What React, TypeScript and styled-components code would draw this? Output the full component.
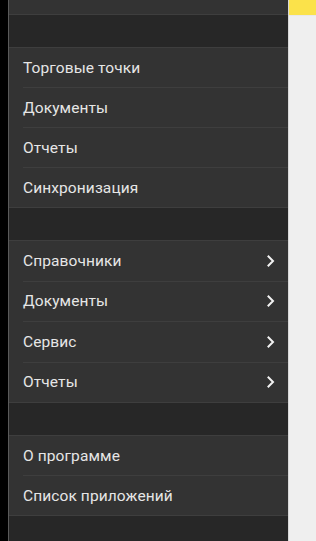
import React from "react";
import styled, { createGlobalStyle } from "styled-components";

const GlobalStyle = createGlobalStyle`
  html, body {
    margin: 0;
    padding: 0;
    background: #000;
    overflow: hidden;
  }
  body {
    font-family: Roboto, "Noto Sans", sans-serif;
  }
`;

const Screen = styled.div`
  display: flex;
  width: 316px;
  height: 541px;
  overflow: hidden;
`;

const Edge = styled.div`
  width: 8px;
  flex: none;
  background: #000;
  border-right: 1px solid #5a5a5a;
`;

const Drawer = styled.nav`
  width: 279px;
  flex: none;
  background: #272727;
  overflow: hidden;
`;

const Scroller = styled.div`
  display: flex;
  flex-direction: column;
  gap: 32px;
  margin-top: -26px;
`;

const Section = styled.ul`
  margin: 0;
  padding: 0;
  list-style: none;
  background: #333333;
  border-top: 1px solid #3e3e3e;
  border-bottom: 1px solid #3e3e3e;
`;

interface ItemProps {
  $tall?: boolean;
}

const Item = styled.li<ItemProps>`
  display: flex;
  align-items: center;
  justify-content: space-between;
  height: ${(p) => (p.$tall ? "39.5px" : "39px")};
  margin-left: 14px;
  padding-right: 12px;
  color: #e6e6e6;
  font-size: 15.5px;
  letter-spacing: 0.1px;

  & + & {
    border-top: 1px solid #3e3e3e;
  }
`;

const Content = styled.main`
  flex: 1;
  display: flex;
  flex-direction: column;
  background: #efefef;
  border-left: 1px solid #d8d8d8;
`;

const TopBar = styled.div`
  height: 15px;
  background: #fbe24a;
  border-bottom: 1px solid #e8e8e8;
`;

function Chevron(): JSX.Element {
  return (
    <svg width="10" height="12" viewBox="0 0 10 12">
      <polyline
        points="2.5,1.5 7,6 2.5,10.5"
        fill="none"
        stroke="#f2f2f2"
        strokeWidth="2"
        strokeLinecap="square"
      />
    </svg>
  );
}

const sections = [
  [{ text: "Начало", more: false }],
  [
    { text: "Торговые точки", more: false },
    { text: "Документы", more: false },
    { text: "Отчеты", more: false },
    { text: "Синхронизация", more: false },
  ],
  [
    { text: "Справочники", more: true },
    { text: "Документы", more: true },
    { text: "Сервис", more: true },
    { text: "Отчеты", more: true },
  ],
  [
    { text: "О программе", more: false },
    { text: "Список приложений", more: false },
  ],
];

function App(): JSX.Element {
  return (
    <>
      <GlobalStyle />
      <Screen>
        <Edge />
        <Drawer>
          <Scroller>
            {sections.map((items, i) => (
              <Section key={i}>
                {items.map(({ text, more }) => (
                  <Item key={text} $tall={more}>
                    <span>{text}</span>
                    {more && <Chevron />}
                  </Item>
                ))}
              </Section>
            ))}
          </Scroller>
        </Drawer>
        <Content>
          <TopBar />
        </Content>
      </Screen>
    </>
  );
}

export default App;
